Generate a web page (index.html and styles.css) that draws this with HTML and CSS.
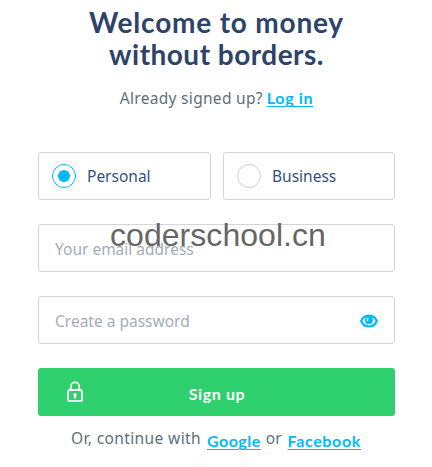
FILE: index.html
```html
<!DOCTYPE html>
<html lang="en">
<head>
<meta charset="utf-8">
<title>Sign up</title>
<link rel="stylesheet" href="styles.css">
</head>
<body>
<main class="signup">
  <h1 class="title"><span class="line-one">Welcome to money</span><br><span class="line-two">without borders.</span></h1>
  <p class="login"><span class="login-text">Already signed up?</span> <a class="link" href="#">Log in</a></p>
  <form class="form">
    <div class="types">
      <label class="box type"><span class="radio checked"></span><span class="personal">Personal</span></label>
      <label class="box type"><span class="radio"></span><span class="business">Business</span></label>
    </div>
    <div class="box field"><span class="email">Your email address</span><span class="watermark">coderschool.cn</span></div>
    <div class="box field"><span class="password">Create a password</span>
      <svg class="eye" width="18" height="14" viewBox="0 0 18 14"><path d="M1.2 7C4 -.3 14 -.3 16.8 7C14 14.3 4 14.3 1.2 7Z" fill="#fff" stroke="#00b9ff" stroke-width="2.2"/><circle cx="9" cy="6.2" r="3.9" fill="#00b9ff"/><path d="M8.3 4.2Q6.7 5.3 7.7 7" fill="none" stroke="#fff" stroke-width="1.3"/></svg>
    </div>
    <button class="submit" type="button">
      <svg class="lock" width="16" height="22" viewBox="0 0 16 22"><path d="M3.8 9V5.6a4.2 4.2 0 0 1 8.4 0V9" fill="none" stroke="#fff" stroke-width="1.8"/><rect x="1" y="9" width="14" height="11.2" rx="2" fill="none" stroke="#fff" stroke-width="1.8"/><path d="M8 12a1.8 1.8 0 0 1 1.1 3.1V17.5H6.9V15.1A1.8 1.8 0 0 1 8 12Z" fill="#fff"/></svg>
      <span class="submit-text">Sign up</span>
    </button>
  </form>
  <p class="social"><span class="continue">Or, continue with</span><a class="link google" href="#">Google</a><span class="or">or</span><a class="link facebook" href="#">Facebook</a></p>
</main>
</body>
</html>
```
FILE: styles.css
```css
* { box-sizing: border-box; }
body { margin: 0; background: #fff; color: #5d7079; font: 16px/24px "Noto Sans", sans-serif; }
.signup { width: 357px; margin-left: 38px; padding-top: 6px; }
.title { margin: 0; color: #2e4369; font: 700 28px/32px Lato, sans-serif; text-align: center; white-space: nowrap; }
.line-one { letter-spacing: .8px; }
.line-two { letter-spacing: .48px; }
.login { margin: 16px 0 0; text-align: center; white-space: nowrap; font-size: 15.5px; }
.login-text, .continue { letter-spacing: .3px; }
.continue { letter-spacing: .38px; }
.link { color: #00b9ff; font: 700 16px/24px Lato, sans-serif; letter-spacing: .65px; text-decoration: underline; text-decoration-thickness: 1px; text-underline-offset: 2px; }
.form { display: flex; flex-direction: column; gap: 24px; margin-top: 42px; }
.types { display: grid; grid-template-columns: 173px 172px; gap: 12px; }
.box { height: 48px; border: 1px solid #d3d5d8; border-radius: 3px; display: flex; align-items: center; }
.type { padding-left: 13px; color: #37517e; font-size: 15.5px; }
.radio { width: 24px; height: 24px; margin-right: 11px; border: 1px solid #c9cfd4; border-radius: 50%; display: grid; place-items: center; }
.checked { border-color: #00b9ff; }
.checked::after { content: ""; width: 12px; height: 12px; border-radius: 50%; background: #00b9ff; }
.field { position: relative; padding: 2px 16px 0; color: #a4adb6; font-size: 15.5px; }
.watermark { position: absolute; left: 71px; top: -8px; color: #666; font: 32px/37px "Liberation Sans", sans-serif; letter-spacing: .05px; }
.eye { margin: -1px 0 0 auto; }
.submit { display: grid; grid-template-columns: 1fr auto 1fr; align-items: center; height: 48px; padding: 0 28px 0 29px; border: 0; border-radius: 3px; background: #2ed06e; color: #fff; font: 700 16px/24px Lato, sans-serif; letter-spacing: .6px; }
.submit-text { padding-top: 4px; }
.social { display: flex; margin: 10px 0 0 33px; white-space: nowrap; font-size: 15.5px; }
.google { margin: 3px 5px 0 6px; letter-spacing: .5px; }
.facebook { margin: 3px 0 0 6px; }
```
